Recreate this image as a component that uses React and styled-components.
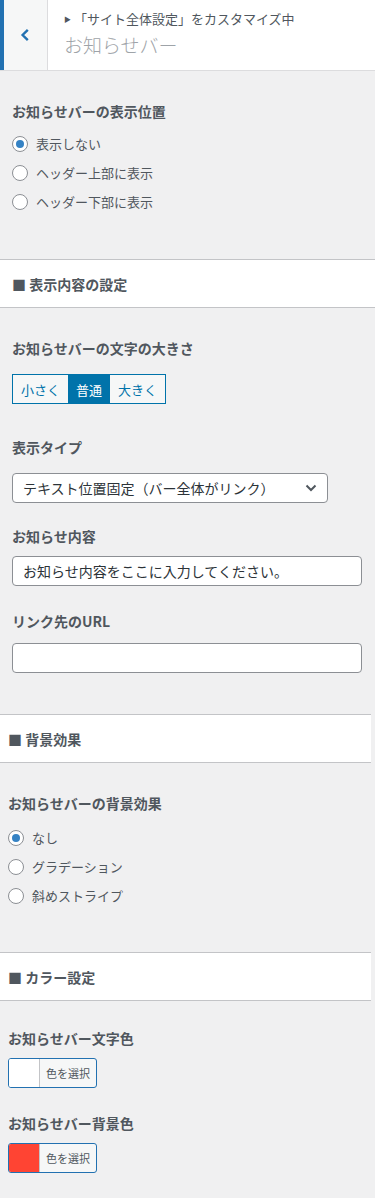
import React from 'react';
import styled, { createGlobalStyle } from 'styled-components';

const GlobalStyle = createGlobalStyle`
    body {
        margin: 0;
        background: #f0f0f1;
        font-family: "Noto Sans CJK JP", "Noto Sans", sans-serif;
        color: #50575e;
    }
    * {
        box-sizing: border-box;
    }
`;

const StPage = styled.div`
    width: 375px;
    min-height: 1198px;
    background: #f0f0f1;
`;

const StHeader = styled.div`
    display: flex;
    height: 71px;
    background: #fff;
    border-bottom: 1px solid #dcdcde;
`;

const StBack = styled.div`
    width: 48px;
    flex-shrink: 0;
    display: flex;
    align-items: center;
    justify-content: center;
    background: #f6f7f7;
    border-left: 4px solid #2271b1;
    border-right: 1px solid #dcdcde;
    padding-right: 2px;
`;

const StTitleBlock = styled.div`
    padding: 8px 0 0 16px;
    display: flex;
    flex-direction: column;
`;

const StCrumb = styled.div`
    font-size: 13px;
    line-height: 22px;
    color: #50575e;
    display: flex;
    align-items: center;

    i {
        font-style: normal;
        font-size: 7px;
        margin-right: 3px;
    }
`;

const StTitle = styled.div`
    font-size: 19px;
    line-height: 30px;
    font-weight: 300;
    color: #9ea3a8;
`;

const StGroup = styled.div`
    padding: ${p => p.$pad || '30px 12px 0'};
    padding-bottom: ${p => p.$bottom || 0}px;
`;

const StLower = styled.div`
    width: 371px;
`;

const StSectionHead = styled.div`
    height: 49px;
    background: #fff;
    border-top: 1px solid #c3c4c7;
    border-bottom: 1px solid #c3c4c7;
    display: flex;
    align-items: center;
    padding-left: ${p => p.$indent}px;
    font-size: 14px;
    font-weight: 700;
    color: #50575e;
`;

const StLabel = styled.div`
    font-size: 14px;
    line-height: 20px;
    font-weight: 700;
    color: #50575e;
    margin-top: ${p => p.$top || 0}px;
    margin-bottom: ${p => p.$bottom || 0}px;
`;

const StRadioRow = styled.label`
    display: flex;
    align-items: center;
    height: 29px;
    font-size: 13px;
    color: #50575e;
    gap: 8px;
`;

const StRadio = styled.span`
    width: 16px;
    height: 16px;
    border-radius: 50%;
    border: 1px solid #8c8f94;
    background: #fff;
    display: flex;
    align-items: center;
    justify-content: center;

    &::after {
        content: '';
        width: 8px;
        height: 8px;
        border-radius: 50%;
        background: ${p => (p.$checked ? '#3582c4' : 'transparent')};
    }
`;

const StSegment = styled.div`
    display: inline-flex;
    border: 1px solid #0073aa;
    height: 30px;
`;

const StSegButton = styled.span`
    display: flex;
    align-items: center;
    padding: 0 8px;
    font-size: 13px;
    color: ${p => (p.$active ? '#fff' : '#0073aa')};
    background: ${p => (p.$active ? '#0073aa' : '#f6f7f7')};
`;

const StSelect = styled.div`
    width: 316px;
    height: 30px;
    background: #fff;
    border: 1px solid #8c8f94;
    border-radius: 4px;
    display: flex;
    align-items: center;
    justify-content: space-between;
    padding: 0 10px 0 10px;
    font-size: 14px;
    color: #2c3338;
`;

const StInput = styled.div`
    width: 350px;
    height: 30px;
    background: #fff;
    border: 1px solid #8c8f94;
    border-radius: 4px;
    display: flex;
    align-items: center;
    padding: 0 10px;
    font-size: 14px;
    color: #2c3338;
`;

const StColorButton = styled.div`
    display: flex;
    width: 89px;
    height: 30px;
    border: 1px solid #2271b1;
    border-radius: 3px;
    overflow: hidden;
    background: #f6f7f7;
`;

const StSwatch = styled.span`
    width: 31px;
    background: ${p => p.$color};
    border-right: 1px solid #c3c4c7;
`;

const StColorText = styled.span`
    flex: 1;
    display: flex;
    align-items: center;
    justify-content: center;
    font-size: 11px;
    color: #50575e;
`;

const Radio = ({ checked, children }) => (
    <StRadioRow>
        <StRadio $checked={checked} />
        <span>{children}</span>
    </StRadioRow>
);

const ColorPicker = ({ color }) => (
    <StColorButton>
        <StSwatch $color={color} />
        <StColorText>色を選択</StColorText>
    </StColorButton>
);

const App = () => (
    <StPage>
        <GlobalStyle />
        <StHeader>
            <StBack>
                <svg width="10" height="14" viewBox="0 0 10 14">
                    <path d="M7.8 1.8 L2.6 7 L7.8 12.2" fill="none" stroke="#2271b1" strokeWidth="2.4" />
                </svg>
            </StBack>
            <StTitleBlock>
                <StCrumb>
                    <i>▶</i>「サイト全体設定」をカスタマイズ中
                </StCrumb>
                <StTitle>お知らせバー</StTitle>
            </StTitleBlock>
        </StHeader>

        <StGroup $bottom={43}>
            <StLabel $bottom={8}>お知らせバーの表示位置</StLabel>
            <Radio checked>表示しない</Radio>
            <Radio>ヘッダー上部に表示</Radio>
            <Radio>ヘッダー下部に表示</Radio>
        </StGroup>

        <StSectionHead $indent={12}>■ 表示内容の設定</StSectionHead>
        <StGroup $bottom={41}>
            <StLabel $bottom={16}>お知らせバーの文字の大きさ</StLabel>
            <StSegment>
                <StSegButton>小さく</StSegButton>
                <StSegButton $active>普通</StSegButton>
                <StSegButton>大きく</StSegButton>
            </StSegment>
            <StLabel $top={33} $bottom={16}>表示タイプ</StLabel>
            <StSelect>
                <span>テキスト位置固定（バー全体がリンク）</span>
                <svg width="12" height="8" viewBox="0 0 12 8">
                    <path d="M1.5 1.5 L6 6 L10.5 1.5" fill="none" stroke="#50575e" strokeWidth="2" />
                </svg>
            </StSelect>
            <StLabel $top={23} $bottom={10}>お知らせ内容</StLabel>
            <StInput>お知らせ内容をここに入力してください。</StInput>
            <StLabel $top={25} $bottom={12}>リンク先のURL</StLabel>
            <StInput />
        </StGroup>

        <StLower>
            <StSectionHead $indent={8}>■ 背景効果</StSectionHead>
            <StGroup $pad="30px 8px 0" $bottom={42}>
                <StLabel $bottom={10}>お知らせバーの背景効果</StLabel>
                <Radio checked>なし</Radio>
                <Radio>グラデーション</Radio>
                <Radio>斜めストライプ</Radio>
            </StGroup>

            <StSectionHead $indent={8}>■ カラー設定</StSectionHead>
            <StGroup $pad="27px 8px 0" $bottom={24}>
                <StLabel $bottom={10}>お知らせバー文字色</StLabel>
                <ColorPicker color="#fff" />
                <StLabel $top={25} $bottom={10}>お知らせバー背景色</StLabel>
                <ColorPicker color="#ff4433" />
            </StGroup>
        </StLower>
    </StPage>
);

export default App;
